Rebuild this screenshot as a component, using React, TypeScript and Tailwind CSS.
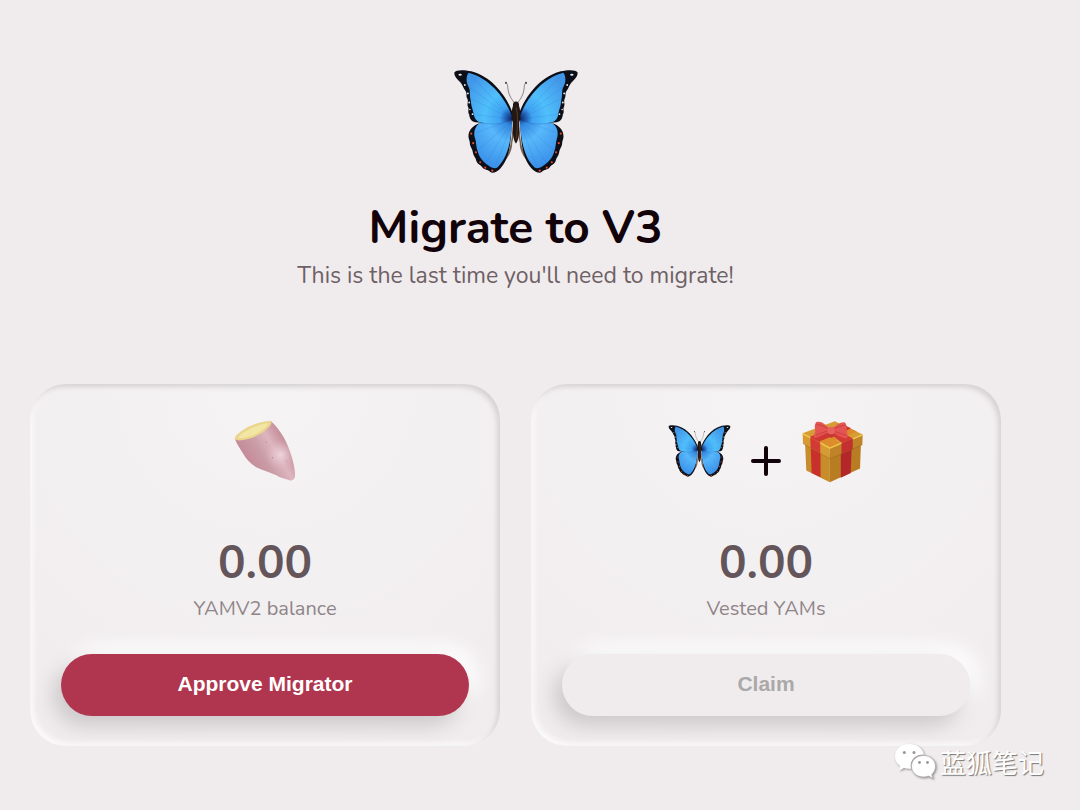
import { useId, type ReactNode } from "react";

function Butterfly({ className }: { className: string }) {
  const id = useId();
  const top = `${id}-top`;
  const low = `${id}-low`;
  const wing = `${id}-wing`;
  return (
    <svg viewBox="38 42 376 314" className={className} role="img" aria-label="Butterfly">
      <defs>
        <radialGradient id={top} gradientUnits="userSpaceOnUse" cx="214" cy="190" r="165">
          <stop offset="0" stopColor="#10255c" />
          <stop offset="0.1" stopColor="#1f56ac" />
          <stop offset="0.22" stopColor="#3fa2f2" />
          <stop offset="0.5" stopColor="#50bffb" />
          <stop offset="1" stopColor="#4296e8" />
        </radialGradient>
        <radialGradient id={low} gradientUnits="userSpaceOnUse" cx="214" cy="190" r="175">
          <stop offset="0" stopColor="#17346f" />
          <stop offset="0.12" stopColor="#3488e2" />
          <stop offset="0.4" stopColor="#58b8fb" />
          <stop offset="1" stopColor="#3488e6" />
        </radialGradient>
        <g id={wing}>
          <path d="M214 214C216 250 208 292 186 324C204 306 215 286 215 262L219 244Z" fill="#7a6250" />
          <path
            d="M116 204C96 212 84 226 84 242C83 250 89 258 88 266C89 276 97 282 97 292C98 302 106 308 107 316C110 328 120 328 125 336C132 345 142 342 149 350C156 356 168 350 178 341C200 316 210 286 213 214Z"
            fill="#0c0f18"
          />
          <path
            d="M118 203C104 214 99 228 102 244C108 260 106 276 112 290C117 308 130 322 146 332C154 338 164 342 172 335C194 314 205 280 210 244L216 196Z"
            fill={`url(#${low})`}
          />
          <path
            d="M219 184C206 136 160 66 92 49C70 44 46 44 42 52C40 63 50 73 60 82C67 90 68 98 74 106C81 114 75 122 81 132C84 140 79 147 82 154C87 161 80 170 86 178C87 190 92 199 104 201L124 203L219 196Z"
            fill="#0c0f18"
          />
          <path
            d="M213 181C197 136 152 70 84 53C77 64 76 80 83 93C91 106 86 120 91 138C92 156 98 164 100 180C104 194 110 199 122 202C156 208 192 204 213 196Z"
            fill={`url(#${top})`}
          />
          <path
            d="M208 184L92 62M206 184L84 95M204 186L90 130M204 190L98 178M206 196L108 232M208 200L114 284M210 204L136 322M212 208L164 334"
            fill="none"
            stroke="#1766b8"
            strokeOpacity="0.22"
            strokeWidth="2"
          />
          <path d="M205 199C180 207 150 208 120 204" fill="none" stroke="#1766b8" strokeOpacity="0.45" strokeWidth="2" />
          <g fill="#e9edf2">
            <ellipse cx="59" cy="59" rx="5" ry="3" />
            <circle cx="73" cy="90" r="2.8" />
            <circle cx="82" cy="115" r="2.8" />
            <circle cx="86" cy="142" r="2.8" />
            <circle cx="88" cy="163" r="2.4" />
            <circle cx="96" cy="177" r="2.6" />
          </g>
          <g fill="#e0492b">
            <circle cx="92" cy="235" r="3.4" />
            <circle cx="98" cy="264" r="3.4" />
            <circle cx="106" cy="291" r="3.4" />
            <circle cx="119" cy="321" r="3.2" />
            <circle cx="134" cy="337" r="3.2" />
            <circle cx="155" cy="346" r="3.4" />
          </g>
          <path d="M221 143C205 124 202 108 201 92Q200 83 195 84" fill="none" stroke="#6f6968" strokeWidth="2.4" strokeLinecap="round" />
          <circle cx="196" cy="83" r="3" fill="#4a4341" />
        </g>
      </defs>
      <use href={`#${wing}`} />
      <use href={`#${wing}`} transform="translate(452 0) scale(-1 1)" />
      <path
        d="M226 139C233 139 236 145 235 153C240 164 239 190 235 202C238 224 234 258 226 265C218 258 214 224 217 202C213 190 212 164 217 153C216 145 219 139 226 139Z"
        fill="#231713"
      />
      <path d="M227 158C232 178 230 224 227 250" fill="none" stroke="#4a3326" strokeWidth="4" strokeLinecap="round" />
    </svg>
  );
}

function SweetPotato({ className }: { className: string }) {
  const id = useId();
  const skin = `${id}-skin`;
  const shine = `${id}-shine`;
  const body =
    "M45 103C50 118 60 132 70 148C80 166 94 180 116 191C138 202 160 205 178 217C190 222 202 224 212 228C222 226 226 220 225 206C224 182 214 150 202 120C192 96 172 66 153 50Z";
  return (
    <svg viewBox="42 46 186 186" className={className} role="img" aria-label="Sweet potato">
      <defs>
        <linearGradient id={skin} gradientUnits="userSpaceOnUse" x1="90" y1="170" x2="190" y2="110">
          <stop offset="0" stopColor="#c58d9a" />
          <stop offset="0.35" stopColor="#c99ca6" />
          <stop offset="0.7" stopColor="#deb6c0" />
          <stop offset="1" stopColor="#c7949f" />
        </linearGradient>
        <radialGradient id={shine} gradientUnits="userSpaceOnUse" cx="182" cy="150" r="46">
          <stop offset="0" stopColor="#eed5db" />
          <stop offset="1" stopColor="#e0b8c2" stopOpacity="0" />
        </radialGradient>
      </defs>
      <path d={body} fill={`url(#${skin})`} />
      <path d={body} fill={`url(#${shine})`} />
      <path d="M45 103C44 92 60 82 78 70C98 58 130 50 150 49C158 52 154 60 146 68C132 84 106 98 84 103C68 107 50 110 45 103Z" fill="#e9d68c" />
      <path d="M54 99C60 88 84 76 100 68C116 60 136 56 146 55C144 66 122 82 100 92C84 98 62 104 54 99Z" fill="#f3e5a3" />
      <g fill="#a87682">
        <circle cx="139" cy="112" r="1.6" />
        <circle cx="158" cy="159" r="1.6" />
        <circle cx="200" cy="170" r="1.4" />
      </g>
    </svg>
  );
}

function Gift({ className }: { className: string }) {
  return (
    <svg viewBox="422 28 188 190" className={className} role="img" aria-label="Gift">
      <path d="M433 92L508 134V216L437 180Z" fill="#c88d2b" />
      <path d="M508 134L602 92L599 174L508 216Z" fill="#b87d22" />
      <path d="M450 102L480 116V201L453 188Z" fill="#c9302c" />
      <path d="M541 120L574 104L571 188L541 202Z" fill="#b3262a" />
      <path d="M426 68L523 32L607 72L508 114Z" fill="#d79c34" />
      <path d="M462 84L494 101L590 63L556 47Z" fill="#dd8a2d" />
      <path d="M447 79L545 40L572 53L478 99Z" fill="#cf3733" />
      <path d="M500 62L520 54L578 84L546 98Z" fill="#d23a35" />
      <path d="M476 93L508 80L538 97L508 112Z" fill="#dd8e2c" />
      <path d="M426 68L508 112V145L427 99Z" fill="#d79b33" />
      <path d="M508 112L607 72L606 103L508 145Z" fill="#bf8427" />
      <path d="M449 80L479 97V129L450 112Z" fill="#d43a35" />
      <path d="M543 98L577 84V116L543 130Z" fill="#c42f2f" />
      <path d="M426 69L449 81M479 97L508 113L543 98M577 85L607 73" fill="none" stroke="#f1c84f" strokeWidth="4" strokeLinejoin="round" />
      <path d="M427 99L508 145L606 103" fill="none" stroke="#94601b" strokeOpacity="0.6" strokeWidth="2" />
      <path d="M503 66C485 74 468 84 461 82C458 74 464 68 464 60C462 50 462 38 468 34C482 30 496 42 506 54Z" fill="#e35452" />
      <path d="M520 66C532 76 548 86 560 82C564 74 558 66 558 58C560 48 558 38 552 35C540 34 526 44 517 54Z" fill="#e35452" />
      <path d="M503 62C490 64 474 70 466 74M506 56C492 48 480 42 468 42M520 62C534 66 548 72 557 74M518 56C530 50 544 44 554 44" fill="none" stroke="#b8322f" strokeWidth="3" strokeOpacity="0.6" />
      <ellipse cx="512" cy="61" rx="12" ry="13" fill="#e9605c" />
      <path d="M503 70C508 75 516 75 521 70" fill="none" stroke="#a92d2c" strokeWidth="3" />
    </svg>
  );
}

function Plus() {
  return (
    <svg viewBox="0 0 30 30" className="mt-5 size-[30px]" aria-hidden="true">
      <path d="M15 2V28M2 15H28" stroke="#12020a" strokeWidth="4" strokeLinecap="round" />
    </svg>
  );
}

function WeChatLogo() {
  return (
    <svg viewBox="0 0 42 38" className="h-[38px] w-[42px] drop-shadow-[1px_1px_1px_rgba(0,0,0,0.4)]" aria-hidden="true">
      <path
        d="M15 1C7 1 1 6.500 1 13.500C1 17.500 3 20.800 6.300 23L5 27.500L10 25C12 25.700 14.500 26 17 25.700C15 17 22 11 30 11.500C28.500 5 22.500 1 15 1Z"
        fill="#fff"
      />
      <path
        d="M29.500 12.500C22.500 12.500 17.500 17.300 17.500 23.300C17.500 29.300 22.500 34 29.500 34C31.300 34 33 33.700 34.500 33L39 35.500L37.800 31.500C40 29.500 41.500 26.600 41.500 23.300C41.500 17.300 36.500 12.500 29.500 12.500Z"
        fill="#fff"
        stroke="#a9a5a6"
        strokeWidth="0.700"
      />
      <g fill="#9b9798">
        <circle cx="10.300" cy="9.500" r="1.500" />
        <circle cx="20" cy="9.500" r="1.500" />
        <circle cx="25.500" cy="19.500" r="1.400" />
        <circle cx="33.500" cy="19.500" r="1.400" />
      </g>
    </svg>
  );
}

type CardProps = {
  icon: ReactNode;
  value: string;
  label: string;
  action: string;
  disabled?: boolean;
};

function Card({ icon, value, label, action, disabled = false }: CardProps) {
  return (
    <section className="flex flex-col items-center rounded-[36px] bg-[radial-gradient(circle_at_top,#f5f3f4,#f0eced)] px-[31px] py-[30px] shadow-[inset_-3px_3px_5px_#d6d2d3,inset_3px_-3px_5px_#fbfafa]">
      <div className="flex h-[74px] items-center gap-5">{icon}</div>
      <p className="mt-[47px] text-[46px] leading-14 font-bold text-[#64555b]">{value}</p>
      <p className="mt-0.5 text-xl leading-8 text-[#8f8488]">{label}</p>
      <button
        type="button"
        disabled={disabled}
        className="mt-[29px] h-[62px] w-full rounded-full bg-[#af364e] pb-0.5 font-['Liberation_Sans',Arial,sans-serif] text-[21px] font-bold text-white shadow-[-8px_10px_20px_#cdc8ca,8px_-8px_20px_#ffffff] disabled:bg-[#f0eced] disabled:text-[#aaa8a9]"
      >
        {action}
      </button>
    </section>
  );
}

export default function App() {
  return (
    <div className="relative min-h-screen bg-[#f0eced] pt-[69px] pr-[79px] pb-16 pl-[30px] font-[Nunito,Lato,'Noto_Sans',sans-serif]">
      <main>
        <header className="flex flex-col items-center text-center">
          <Butterfly className="h-[105px] w-[126px]" />
          <h1 className="mt-[26px] text-[46px] leading-14 font-bold text-[#12020a]">Migrate to V3</h1>
          <p className="mt-0.5 text-[23px] leading-9 text-[#6e6065]">This is the last time you'll need to migrate!</p>
        </header>
        <div className="mt-[90px] grid grid-cols-2 gap-[31px]">
          <Card
            icon={<SweetPotato className="size-[62px]" />}
            value="0.00"
            label="YAMV2 balance"
            action="Approve Migrator"
          />
          <Card
            icon={
              <>
                <Butterfly className="h-[54px] w-[63px]" />
                <Plus />
                <Gift className="size-[63px]" />
              </>
            }
            value="0.00"
            label="Vested YAMs"
            action="Claim"
            disabled
          />
        </div>
      </main>
      <div className="absolute right-9 bottom-7 flex items-center gap-1">
        <WeChatLogo />
        <span lang="zh-CN" className="font-['Noto_Sans_CJK_SC',sans-serif] text-[26px] leading-10 text-white [text-shadow:1px_1px_1px_#777]">
          蓝狐笔记
        </span>
      </div>
    </div>
  );
}
